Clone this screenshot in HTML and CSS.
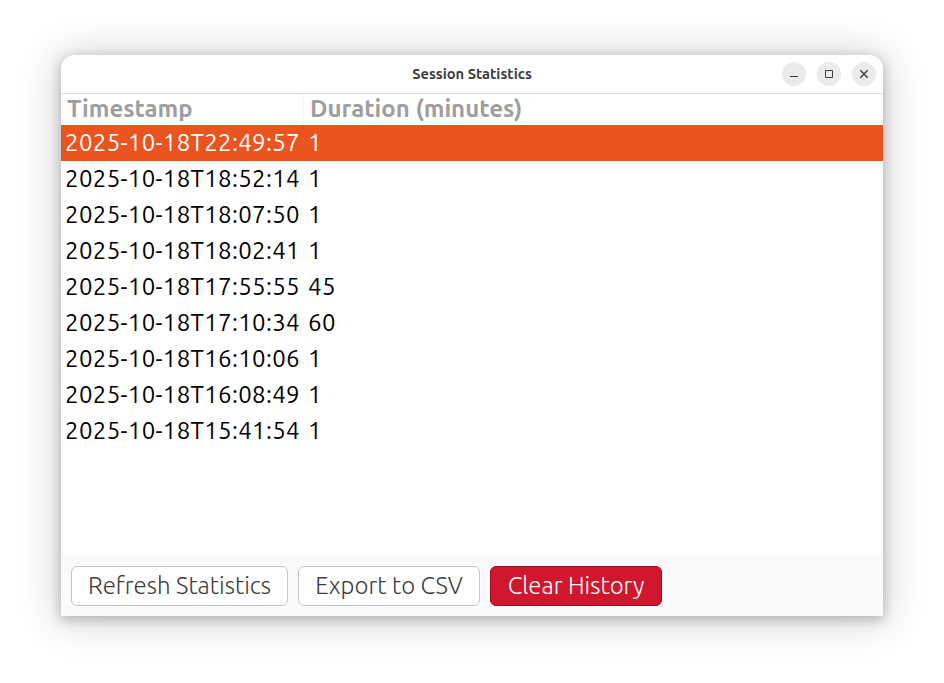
FILE: index.html
```html
<!DOCTYPE html>
<html lang="en">
<head>
<meta charset="utf-8">
<title>Session Statistics</title>
<link rel="stylesheet" href="styles.css">
</head>
<body>
<main class="window">
  <header class="titlebar">
    <h1 class="title">Session Statistics</h1>
    <div class="controls">
      <button class="control" aria-label="Minimize"><svg viewBox="0 0 24 24"><path d="M8 14.5h8"/></svg></button>
      <button class="control" aria-label="Maximize"><svg viewBox="0 0 24 24"><path d="M8.5 8.5h7v7h-7z"/></svg></button>
      <button class="control" aria-label="Close"><svg viewBox="0 0 24 24"><path class="cross" d="M8.3 8.3l7.4 7.4M15.7 8.3l-7.4 7.4"/></svg></button>
    </div>
  </header>
  <section class="table">
    <div class="head"><span class="stamp"><b>Timestamp</b></span><span class="duration"><b>Duration (minutes)</b></span></div>
    <div class="row selected"><span class="stamp">2025-10-18T22:49:57</span><span class="duration">1</span></div>
    <div class="row"><span class="stamp">2025-10-18T18:52:14</span><span class="duration">1</span></div>
    <div class="row"><span class="stamp">2025-10-18T18:07:50</span><span class="duration">1</span></div>
    <div class="row"><span class="stamp">2025-10-18T18:02:41</span><span class="duration">1</span></div>
    <div class="row"><span class="stamp">2025-10-18T17:55:55</span><span class="duration">45</span></div>
    <div class="row"><span class="stamp">2025-10-18T17:10:34</span><span class="duration">60</span></div>
    <div class="row"><span class="stamp">2025-10-18T16:10:06</span><span class="duration">1</span></div>
    <div class="row"><span class="stamp">2025-10-18T16:08:49</span><span class="duration">1</span></div>
    <div class="row"><span class="stamp">2025-10-18T15:41:54</span><span class="duration">1</span></div>
  </section>
  <footer class="actions">
    <button class="action refresh">Refresh Statistics</button>
    <button class="action export">Export to CSV</button>
    <button class="action clear">Clear History</button>
  </footer>
</main>
</body>
</html>
```
FILE: styles.css
```css
* { box-sizing: border-box; }
body {
  margin: 0;
  height: 683px;
  padding: 55px 61px 67px;
  overflow: hidden;
  background: #fff;
  font-family: Ubuntu, "Noto Sans", sans-serif;
}
.window {
  display: flex;
  flex-direction: column;
  height: 561px;
  overflow: hidden;
  border-radius: 14px 14px 0 0;
  background: #fff;
  box-shadow: 0 3px 12px 1px rgba(0,0,0,.22), 0 2px 42px 5px rgba(0,0,0,.16);
}
.titlebar {
  display: grid;
  grid-template-columns: 1fr auto 1fr;
  align-items: center;
  height: 39px;
  border-bottom: 1px solid #dcdcdc;
}
.title {
  grid-column: 2;
  margin: 0;
  font-size: 14.67px;
  font-weight: 700;
  line-height: 20px;
  color: #3d3d3d;
}
.controls {
  display: flex;
  justify-content: flex-end;
  gap: 11px;
  padding-right: 7px;
}
.control {
  width: 24px;
  height: 24px;
  padding: 0;
  border: 0;
  border-radius: 50%;
  background: #ebebeb;
}
.control svg { display: block; fill: none; stroke: #3d3d3d; }
.cross { stroke-width: 1.4; }
.table { flex: 1; }
.head, .row { display: flex; }
.head {
  height: 31px;
  line-height: 29px;
  font-size: 24px;
  color: #9e9e9e;
}
.head .stamp { border-right: 1px solid #f7f7f7; padding-left: 6px; }
.head .duration { padding-left: 6px; }
.head b { font-weight: 600; white-space: nowrap; }
.row {
  height: 36px;
  line-height: 35px;
  font-size: 24px;
  font-weight: 370;
  letter-spacing: .34px;
  color: #000;
}
.stamp { width: 243px; padding-left: 4px; white-space: nowrap; }
.duration { padding-left: 4px; }
.selected { background: #e95420; color: #fff; }
.actions {
  display: flex;
  gap: 10px;
  height: 60px;
  padding: 10px;
  background: #fafafa;
}
.action {
  height: 40px;
  padding: 0;
  border: 1px solid #c6c6c6;
  border-radius: 6px;
  background: #fff;
  color: #3d3d3d;
  font: 330 24px/36px Ubuntu, "Noto Sans", sans-serif;
  white-space: nowrap;
}
.refresh { width: 217px; }
.export { width: 182px; }
.clear { width: 172px; border-color: #980f20; background: #d1172e; color: #fff; }
```
